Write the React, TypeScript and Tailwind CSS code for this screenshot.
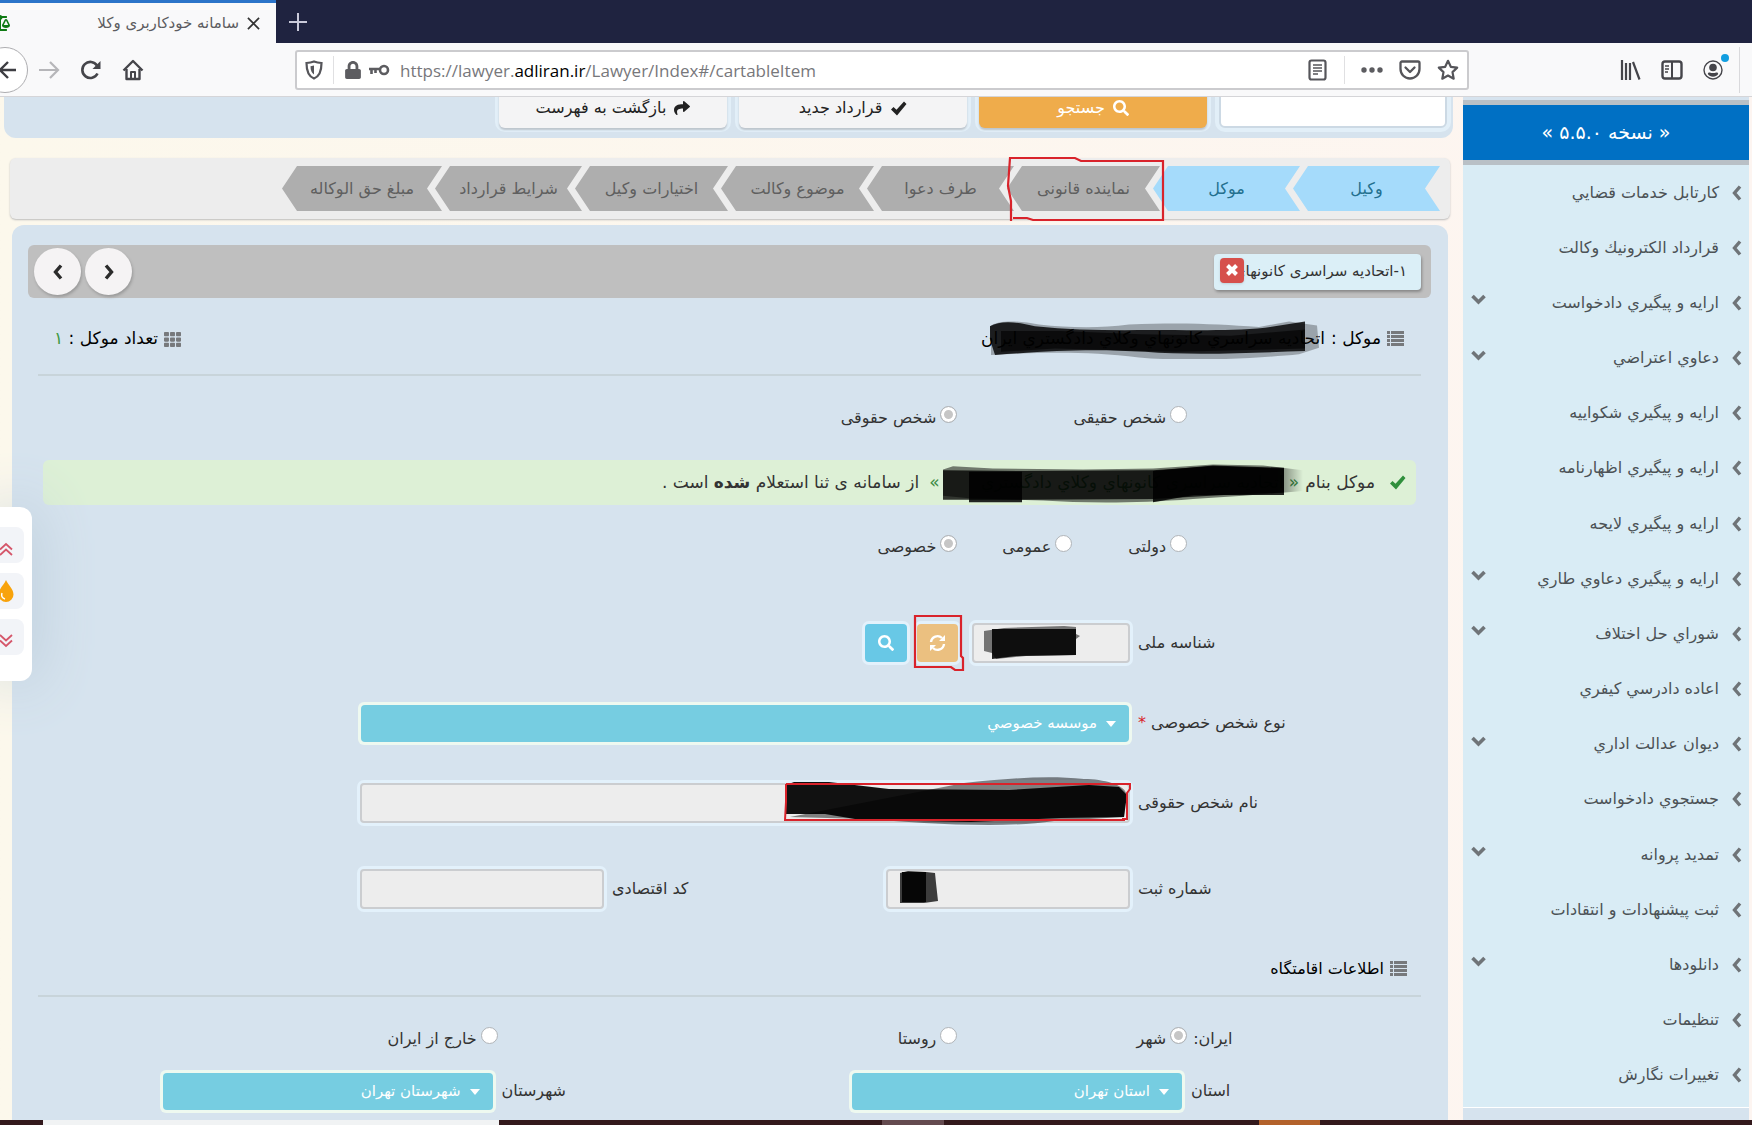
import type { ReactNode } from "react";
import { FaBalanceScale, FaLock, FaSearch, FaShare, FaTh } from "react-icons/fa";

const STEPS = [
    { title: "وکیل", done: true, width: "w-[147px]" },
    { title: "موکل", done: true, width: "w-[147px]" },
    { title: "نماینده قانونی", done: false, width: "w-[153px]", marked: true },
    { title: "طرف دعوا", done: false, width: "w-[147px]" },
    { title: "موضوع وکالت", done: false, width: "w-[153px]" },
    { title: "اختیارات وکیل", done: false, width: "w-[153px]" },
    { title: "شرایط قرارداد", done: false, width: "w-[147px]" },
    { title: "مبلغ حق الوکاله", done: false, width: "w-[160px]" },
];

const MENU = [
    { title: "كارتابل خدمات قضايي" },
    { title: "قرارداد الكترونيك وكالت" },
    { title: "ارايه و پيگيري دادخواست", sub: true },
    { title: "دعاوي اعتراضي", sub: true },
    { title: "ارايه و پيگيري شكواييه" },
    { title: "ارايه و پيگيري اظهارنامه" },
    { title: "ارايه و پيگيري لايحه" },
    { title: "ارايه و پيگيري دعاوي طاري", sub: true },
    { title: "شوراي حل اختلاف", sub: true },
    { title: "اعاده دادرسي كيفري" },
    { title: "ديوان عدالت اداري", sub: true },
    { title: "جستجوي دادخواست" },
    { title: "تمديد پروانه", sub: true },
    { title: "ثبت پيشنهادات و انتقادات" },
    { title: "دانلودها", sub: true },
    { title: "تنظيمات" },
    { title: "تغييرات نگارش" },
];

/* ---------- Icons ---------- */

function ListIcon() {
    return (
        <svg width="17" height="16" viewBox="0 0 17 16" fill="#77797c">
            {[0, 4, 8, 12].map((y) => (
                <g key={y}>
                    <rect x="0" y={y} width="3" height="3" />
                    <rect x="4" y={y} width="13" height="3" />
                </g>
            ))}
        </svg>
    );
}

function RefreshIcon() {
    return (
        <svg width="17" height="18" viewBox="0 0 17 18" fill="none" stroke="#fff" strokeWidth="2.4">
            <path d="M2 8a6.5 6.5 0 0 1 11-4M15 10a6.5 6.5 0 0 1-11 4" />
            <path d="M16 1v6h-6zM1 17v-6h6z" fill="#fff" stroke="none" />
        </svg>
    );
}

function CheckIcon() {
    return (
        <svg width="17" height="15" viewBox="0 0 17 15" fill="currentColor">
            <path d="M1 8.500L3.500 6l3 2.800L14 .5 16.500 3 7 14.500z" />
        </svg>
    );
}

function CrossIcon() {
    return (
        <svg width="12" height="12" viewBox="0 0 12 12" stroke="currentColor" strokeWidth="4">
            <path d="M1.500 1.500l9 9M10.500 1.500l-9 9" />
        </svg>
    );
}

const CHEVRONS = {
    left: "M9 1.500L3.500 8 9 14.500",
    right: "M3 1.500L8.500 8 3 14.500",
};

function Chevron({ to, color }: { to: "left" | "right"; color: string }) {
    return (
        <svg width="12" height="16" viewBox="0 0 12 16" fill="none" stroke={color} strokeWidth="3.400">
            <path d={CHEVRONS[to]} />
        </svg>
    );
}

/* ---------- Browser bars ---------- */

function Browser() {
    const iconButton = "flex items-center justify-center text-[#45454a]";
    return (
        <header className="shrink-0" dir="ltr">
            <div className="flex h-[43px] bg-[#1f2340]">
                <div className="flex w-[276px] items-center border-t-[3px] border-[#2b74c9] bg-[#f9f9fa] pr-4">
                    <FaBalanceScale className="-ml-2.5 size-5 text-[#0f7a14]" />
                    <span className="ml-auto text-[15px] text-[#5c5c60]" dir="rtl">
                        سامانه خودکاربری وکلا
                    </span>
                    <button aria-label="بستن" className="ml-2">
                        <svg width="13" height="13" viewBox="0 0 14 14" stroke="#333" strokeWidth="1.8">
                            <path d="M1 1l12 12M13 1L1 13" />
                        </svg>
                    </button>
                </div>
                <button aria-label="برگه جدید" className="ml-3">
                    <svg width="20" height="20" viewBox="0 0 20 20" stroke="#c9cada" strokeWidth="2">
                        <path d="M10 1v18M1 10h18" />
                    </svg>
                </button>
            </div>
            <div className="flex h-[54px] items-center border-b border-[#d5d5d8] bg-[#f9f9fa]">
                <button
                    aria-label="قبلی"
                    className="-ml-[18px] flex size-[46px] items-center justify-end rounded-full border border-[#adadb0] bg-white pr-2.5"
                >
                    <svg width="20" height="20" viewBox="0 0 20 20" fill="none" stroke="#3d3d42" strokeWidth="2.4">
                        <path d="M19 10H4M11 2l-8 8 8 8" />
                    </svg>
                </button>
                <button aria-label="بعدی" className="ml-2.5">
                    <svg width="22" height="20" viewBox="0 0 22 20" fill="none" stroke="#b6b6b9" strokeWidth="2.2">
                        <path d="M1 10h18M12 2l8 8-8 8" />
                    </svg>
                </button>
                <button aria-label="بارگذاری دوباره" className="ml-5">
                    <svg width="22" height="20" viewBox="0 0 22 20" fill="none" stroke="#45454a" strokeWidth="2.6">
                        <path d="M17.5 13.5A8 8 0 1 1 17 5.5" />
                        <path d="M20.5 1v8h-8z" fill="#45454a" stroke="none" />
                    </svg>
                </button>
                <button aria-label="خانه" className="ml-5">
                    <svg width="22" height="22" viewBox="0 0 22 22" fill="none" stroke="#45454a" strokeWidth="2.4" strokeLinejoin="round">
                        <path d="M1.5 11.5L11 2l9.500 9.500" />
                        <path d="M4.500 10v10h13V10" />
                        <path d="M9 20v-7h4v7" strokeWidth="2" />
                    </svg>
                </button>

                <div className="ml-[151px] flex h-10 flex-1 items-center rounded-[3px] border-2 border-[#cbcbce] bg-white px-2">
                    <svg width="18" height="20" viewBox="0 0 18 20" fill="none" stroke="#55555a" strokeWidth="2.2">
                        <path d="M9 1.500c2.500 1 5 1.400 7.500 1.500 0 7-1 13-7.500 15.500C2.500 16 1.500 10 1.500 3 4 2.900 6.500 2.500 9 1.500z" />
                        <path d="M9 5.500v9c-2.500-1.500-3.500-4.500-3.500-8.200z" fill="#55555a" stroke="none" />
                    </svg>
                    <span className="ml-2.5 h-7 w-px bg-[#e0e0e2]" />
                    <FaLock className="ml-2.5 size-[18px] text-[#5c5c60]" />
                    <svg className="ml-1.5" width="22" height="12" viewBox="0 0 22 12" fill="none" stroke="#5c5c60">
                        <circle cx="16" cy="6" r="4" strokeWidth="2.6" />
                        <path d="M12 5H1M3.500 5v5M7.500 5v4" strokeWidth="2.600" />
                    </svg>
                    <span className="ml-2.5 pt-0.5 font-['Open_Sans',sans-serif] text-[17px] text-[#77777b]">
                        https://lawyer.<span className="text-black">adliran.ir</span>/Lawyer/Index#/cartableItem
                    </span>
                    <span className="ml-auto flex items-center">
                        <button aria-label="نمای خواندن" className={iconButton}>
                            <svg width="20" height="22" viewBox="0 0 20 22" fill="none" stroke="#55555a">
                                <rect x="1.500" y="1.500" width="16" height="19" rx="2" strokeWidth="2.200" />
                                <path d="M5 6h9M5 9h9M5 12h9M5 15h5" strokeWidth="1.300" />
                            </svg>
                        </button>
                        <span className="mx-4 h-7 w-px bg-[#e0e0e2]" />
                        <button aria-label="بیشتر" className={iconButton}>
                            <svg width="22" height="6" viewBox="0 0 22 6" fill="#5c5c60">
                                <circle cx="3" cy="3" r="2.700" />
                                <circle cx="11" cy="3" r="2.700" />
                                <circle cx="19" cy="3" r="2.700" />
                            </svg>
                        </button>
                        <button aria-label="ذخیره" className={`${iconButton} ml-4`}>
                            <svg width="22" height="20" viewBox="0 0 22 20" fill="none" stroke="#55555a" strokeWidth="2.300" strokeLinejoin="round">
                                <path d="M3 1.500h16a1.500 1.500 0 0 1 1.500 1.500v6a9.500 9.500 0 0 1-19 0V3A1.500 1.500 0 0 1 3 1.500z" />
                                <path d="M6.500 7.500L11 12l4.500-4.500" strokeLinecap="round" />
                            </svg>
                        </button>
                        <button aria-label="نشانک" className={`${iconButton} ml-4`}>
                            <svg width="22" height="22" viewBox="0 0 22 22" fill="none" stroke="#55555a" strokeWidth="2.200" strokeLinejoin="round">
                                <path d="M11 1.800l2.800 6 6.400.8-4.700 4.500 1.200 6.600-5.700-3.200-5.700 3.200 1.200-6.600L1.800 8.600l6.400-.8z" />
                            </svg>
                        </button>
                    </span>
                </div>

                <div className="ml-[151px] flex items-center gap-5">
                    <button aria-label="کتابخانه" className={iconButton}>
                        <svg width="21" height="20" viewBox="0 0 21 20" fill="none" stroke="#45454a" strokeWidth="2.200">
                            <path d="M2 0v20M6 3v17M10 3v17M13 2l6.500 17.500" />
                        </svg>
                    </button>
                    <button aria-label="نوار کناری" className={iconButton}>
                        <svg width="22" height="20" viewBox="0 0 22 20" fill="none" stroke="#45454a">
                            <rect x="1.500" y="1.500" width="19" height="17" rx="2.500" strokeWidth="2.400" />
                            <path d="M11 2v16" strokeWidth="2" />
                            <path d="M4 6h4M4 9h4M4 12h3" strokeWidth="1.300" />
                        </svg>
                    </button>
                    <button aria-label="حساب" className={`${iconButton} relative`}>
                        <svg width="20" height="20" viewBox="0 0 20 20" fill="#45454a">
                            <circle cx="10" cy="10" r="9" fill="none" stroke="#45454a" strokeWidth="1.400" />
                            <circle cx="10" cy="7.500" r="3.800" />
                            <path d="M4.800 14c0-1.300 1-1.800 2-1.500 2 .8 4.400.8 6.400 0 1-.3 2 .2 2 1.500-1.300 1.900-3 2.700-5.200 2.700s-3.900-.8-5.200-2.700z" />
                        </svg>
                        <span className="absolute -right-1.5 -top-1.5 size-2 rounded-full bg-[#129ee0]" />
                    </button>
                </div>
                <span className="ml-4 mr-3 h-[46px] w-px bg-[#d9d9dc]" />
            </div>
        </header>
    );
}

/* ---------- Marks drawn over the form ---------- */

function RedMark({ className, d, box }: { className: string; d: string; box: string }) {
    return (
        <svg
            className={`pointer-events-none absolute z-10 ${className}`}
            viewBox={box}
            fill="none"
            stroke="#d9232b"
            strokeWidth="2.200"
            aria-hidden="true"
        >
            <path d={d} />
        </svg>
    );
}

function ClientScribble() {
    return (
        <svg
            className="absolute left-2 top-1/2 z-10 -translate-y-1/2"
            width="332"
            height="40"
            viewBox="0 0 332 50"
            preserveAspectRatio="none"
            aria-hidden="true"
        >
            <path d="M1 9C10 1 30 2 50 7c30 4 60 5 90 0 60-3 90 0 130 3l30-7 28 5 2 28-20 8c-40 5-110 10-160 4-50-7-90-7-148-3L2 36z" fill="#111" opacity=".3" />
            <path d="M1 9C12 1 30 4 46 9c30 4 60 5 90 5 50-1 100 2 140-3l40-8v37c-50 2-110 6-160 1-50-4-90-2-150 4L1 26z" fill="#000" opacity=".82" />
            <path d="M12 15h60l80 4 90 2 74-8v24l-130 4-120-4-54 4z" fill="#000" opacity=".6" />
        </svg>
    );
}

function AlertScribble() {
    return (
        <svg
            className="absolute left-0 top-1/2 z-10 -translate-y-1/2"
            width="362"
            height="40"
            viewBox="0 0 362 50"
            preserveAspectRatio="none"
            aria-hidden="true"
        >
            <defs>
                <linearGradient id="fade">
                    <stop offset=".93" stopColor="#000" />
                    <stop offset="1" stopColor="#000" stopOpacity="0" />
                </linearGradient>
            </defs>
            <path d="M12 4l40 3 90 1 70-1 60-5 50 1 40 6v26l-60 6-50 4c-60 6-110 5-150 2L28 44 2 41V8z" fill="url(#fade)" opacity=".5" />
            <path d="M2 9l80 1 130-1 60-5 45 2 26 1v30l-60 3-71 5-150 1H2z" fill="#000" opacity=".78" />
            <path d="M28 11h53v38H28zM212 10l60-7 71 3v34h-30l-60 0-41 9z" fill="#000" opacity=".85" />
        </svg>
    );
}

/* ---------- Form pieces ---------- */

function Radio({
    id,
    name,
    label,
    checked = false,
    className = "",
}: {
    id: string;
    name: string;
    label: string;
    checked?: boolean;
    className?: string;
}) {
    return (
        <div className={`flex items-center gap-1 whitespace-nowrap ${className}`}>
            <input
                type="radio"
                id={id}
                name={name}
                defaultChecked={checked}
                className="mb-2 size-[17px] shrink-0 appearance-none rounded-full border border-[#b0b4b8] bg-white checked:bg-[#c6c6c6] checked:shadow-[inset_0_0_0_3px_#fff]"
            />
            <label htmlFor={id}>{label}</label>
        </div>
    );
}

function Select({ id, value, className }: { id: string; value: string; className: string }) {
    return (
        <div className={`relative shrink-0 rounded-md bg-[#eef9f0] p-[3px] ${className}`}>
            <select
                id={id}
                className="block h-[37px] w-full appearance-none rounded-[4px] bg-[#76cde1] pr-8 text-[15px] text-white"
            >
                <option>{value}</option>
            </select>
            <svg className="pointer-events-none absolute right-4 top-[19px]" width="10" height="6" viewBox="0 0 10 6" fill="#fff">
                <path d="M0 0h10L5 6z" />
            </svg>
        </div>
    );
}

function TextBox({ id, className }: { id: string; className: string }) {
    return (
        <input
            id={id}
            type="text"
            readOnly
            className={`block h-10 rounded-[4px] border-2 border-[#cbcdd0] bg-[#ededed] px-3 shadow-[0_0_0_3px_#e3f1fb] ${className}`}
        />
    );
}

function FieldRow({ id, label, children }: { id: string; label: ReactNode; children: ReactNode }) {
    return (
        <div className="flex h-20 items-center">
            <label htmlFor={id} className="w-[287px] shrink-0 pl-2 text-left">
                {label}
            </label>
            {children}
        </div>
    );
}

function TopBar() {
    const base =
        "flex h-10 w-[228px] items-center justify-center gap-2 rounded-md shadow-[0_2px_2px_#bcc4cc,0_0_0_4px_#e2eff8]";
    return (
        <div className="-mt-[13px] ml-1 mr-2.5 flex h-[54px] shrink-0 gap-3 rounded-b-xl bg-[#d6e3ee] pr-1.5 pt-1">
            <input
                aria-label="عبارت جستجو"
                type="text"
                className="h-10 w-[228px] rounded-md border-2 border-[#ccd9e4] bg-white shadow-[0_0_0_4px_#e2eff8]"
            />
            <button className={`${base} bg-[#efac4b] text-white`}>
                <FaSearch />
                جستجو
            </button>
            <button className={`${base} bg-[#f4f4f5] text-[#222]`}>
                <CheckIcon />
                قرارداد جدید
            </button>
            <button className={`${base} bg-[#f4f4f5] text-[#222]`}>
                <FaShare />
                بازگشت به فهرست
            </button>
        </div>
    );
}

function StepBar() {
    return (
        <nav className="ml-2.5 mr-[13px] mt-5 flex h-[61px] shrink-0 rounded-md bg-[#ededed] pr-2.5 pt-2 shadow-[0_1px_2px_#bbb]">
            {STEPS.map((step) => (
                <div key={step.title} className={`relative -ml-[7px] h-[45px] shrink-0 ${step.width}`}>
                    <button
                        className={`h-full w-full [clip-path:polygon(15px_0,100%_0,calc(100%-15px)_50%,100%_100%,15px_100%,0_50%)] ${
                            step.done ? "bg-[#a5dbfb] text-[#23708f]" : "bg-[#aeaeae] text-[#5f5f5f]"
                        }`}
                    >
                        {step.title}
                    </button>
                    {step.marked && (
                        <RedMark
                            className="-left-0.5 -top-[10px] h-[66px] w-[160px]"
                            box="0 0 160 66"
                            d="M6 65V45L3 30 5 2h65l6 3h82v59H28l-6-2H8"
                        />
                    )}
                </div>
            ))}
        </nav>
    );
}

function ClientForm() {
    return (
        <main className="ml-3 mr-[15px] mt-1.5 flex-1 rounded-t-xl bg-[#d6e3ee] pt-5 text-[#333]">
            <div className="ml-4 mr-[17px] flex h-[53px] items-center rounded-md bg-[#bfbfbf] pl-1.5 pr-2.5">
                <div className="relative flex h-9 w-[207px] items-center rounded-[4px] bg-[#dbeff7] pr-3.5 shadow-[1px_2px_3px_#888]">
                    <span className="whitespace-nowrap text-[15px]">۱-اتحادیه سراسری کانونهاي</span>
                    <button
                        aria-label="حذف"
                        className="absolute left-1.5 top-1 flex h-[25px] w-6 items-center justify-center rounded-[4px] bg-[#d6504c] text-white shadow"
                    >
                        <CrossIcon />
                    </button>
                </div>
                <div className="mr-auto flex gap-1">
                    <button
                        aria-label="بعدی"
                        className="flex size-[47px] items-center justify-center rounded-full bg-[#f5f3f4] shadow-[1px_2px_3px_#999]"
                    >
                        <Chevron to="right" color="#2b2b2b" />
                    </button>
                    <button
                        aria-label="قبلی"
                        className="flex size-[47px] items-center justify-center rounded-full bg-[#f5f3f4] shadow-[1px_2px_3px_#999]"
                    >
                        <Chevron to="left" color="#2b2b2b" />
                    </button>
                </div>
            </div>

            <div className="ml-[26px] mr-[27px]">
                <div className="flex h-[78px] items-center border-b-2 border-[#c8d4da] pl-4 pr-[17px] pt-1.5 text-[17px] text-black">
                    <h2 className="flex items-center gap-1.5 whitespace-nowrap">
                        <ListIcon />
                        موکل :
                        <span className="relative">
                            اتحادیه سراسري کانونهاي وکلاي دادگستري ایران
                            <ClientScribble />
                        </span>
                    </h2>
                    <p className="mr-auto flex items-center gap-1.5">
                        <FaTh className="text-[#77797c]" />
                        <span>
                            تعداد موکل : <span className="text-[#3f9a45]">۱</span>
                        </span>
                    </p>
                </div>

                <div className="mr-1 grid h-[84px] grid-cols-12 items-center">
                    <Radio id="real" name="kind" label="شخص حقیقی" className="col-start-3" />
                    <Radio id="legal" name="kind" label="شخص حقوقی" checked className="col-start-5" />
                </div>

                <p className="ml-[5px] mr-[5px] flex h-[45px] items-center whitespace-nowrap rounded-md bg-[#ddf0d6] pr-2.5 text-[17px]">
                    <span className="text-[#2f8f3c]">
                        <CheckIcon />
                    </span>
                    <span className="mr-3.5">موکل بنام</span>
                    <span className="relative mx-1.5 w-[374px] text-[#3c8a45]">
                        « اتحادیه سراسري کانونهاي وکلاي دادگستري
                        <span className="absolute left-0 top-0 bg-[#ddf0d6] pl-1">»</span>
                        <span className="absolute inset-y-0 left-4">
                            <AlertScribble />
                        </span>
                    </span>
                    <span>
                        از سامانه ی ثنا استعلام <b className="font-semibold">شده</b> است .
                    </span>
                </p>

                <div className="mr-1 grid h-[84px] grid-cols-12 items-center">
                    <Radio id="gov" name="sector" label="دولتی" className="col-start-3" />
                    <Radio id="public" name="sector" label="عمومی" className="col-start-4" />
                    <Radio id="private" name="sector" label="خصوصی" checked className="col-start-5" />
                </div>

                <div className="mr-1 pt-[14px]">
                    <FieldRow id="nid" label="شناسه ملی">
                        <div className="relative">
                            <TextBox id="nid" className="w-[158px]" />
                            <svg className="absolute left-2.5 top-0.5" width="100" height="36" viewBox="0 0 100 36" aria-hidden="true">
                                <path d="M2 6l20-3 60-2 12 1v7l4 2-4 3v16l-50 1-30 3-4-6-8-2z" fill="#111" opacity=".55" />
                                <path d="M10 4h84v26l-60 1-24 3z" fill="#000" opacity=".88" />
                            </svg>
                        </div>
                        <div className="relative mr-3.5">
                            <button
                                aria-label="بازنشانی"
                                className="flex h-[38px] w-[41px] items-center justify-center rounded-[4px] bg-[#ebc080] shadow-[0_0_0_3px_#e3f1fb]"
                            >
                                <RefreshIcon />
                            </button>
                            <RedMark
                                className="-left-1 -top-2.5 h-[58px] w-[52px]"
                                box="0 0 52 58"
                                d="M2 2h46v40l2 2v12h-8l-4-3H2z"
                            />
                        </div>
                        <button
                            aria-label="استعلام"
                            className="mr-2.5 flex h-[38px] w-[42px] items-center justify-center rounded-[4px] bg-[#68c8e6] text-white shadow-[0_0_0_3px_#e3f1fb]"
                        >
                            <FaSearch />
                        </button>
                    </FieldRow>

                    <FieldRow
                        id="ptype"
                        label={
                            <>
                                نوع شخص خصوصی <span className="text-[#d9232b]">*</span>
                            </>
                        }
                    >
                        <Select id="ptype" value="موسسه خصوصي" className="-mr-0.5 w-[774px]" />
                    </FieldRow>

                    <FieldRow id="pname" label="نام شخص حقوقی">
                        <div className="relative">
                            <TextBox id="pname" className="w-[770px]" />
                            <svg className="absolute -right-1 -top-1.5 z-10" width="350" height="50" viewBox="0 0 350 50" aria-hidden="true">
                                <path d="M180 6c40-4 80-8 120-4 20 0 40 6 42 14l-2 24-70 4c-40 6-90 4-130 2l-60-4-74-2z" fill="#111" opacity=".5" />
                                <path d="M2 8l8-3h35l60 7 120 1 80-5 30 2 8 8-3 22-63 1-90 4-110-2-36-6H2z" fill="#000" opacity=".93" />
                                <path d="M2 7h344v5l-3 4v26h-5M2 7v18l-1 18h340" fill="none" stroke="#d9232b" strokeWidth="2" />
                            </svg>
                        </div>
                    </FieldRow>

                    <div className="mt-1.5">
                        <FieldRow id="regno" label="شماره ثبت">
                            <div className="flex w-[770px] justify-between">
                                <div className="relative">
                                    <TextBox id="regno" className="w-[244px]" />
                                    <svg className="absolute left-3.5 top-0.5" width="42" height="34" viewBox="0 0 42 34" aria-hidden="true">
                                        <path d="M0 2l8-2 18 1 9 1 1 10 2 18-14 2H0z" fill="#000" opacity=".75" />
                                        <path d="M2 1h24v30H2z" fill="#000" opacity=".9" />
                                    </svg>
                                </div>
                                <div className="flex items-center gap-2">
                                    <label htmlFor="econ">کد اقتصادی</label>
                                    <TextBox id="econ" className="w-[244px]" />
                                </div>
                            </div>
                        </FieldRow>
                    </div>
                </div>

                <h2 className="mt-2 flex h-[60px] items-center gap-1.5 border-b-2 border-[#c8d4da] pr-3.5 pt-1.5 text-black">
                    <ListIcon />
                    اطلاعات اقامتگاه
                </h2>

                <div className="mr-1 grid h-[70px] grid-cols-12 items-center pt-3.5">
                    <span className="col-span-2 pl-1.5 text-left">ایران:</span>
                    <Radio id="city" name="place" label="شهر" checked />
                    <Radio id="village" name="place" label="روستا" className="col-start-5" />
                    <Radio id="abroad" name="place" label="خارج از ایران" className="col-start-9" />
                </div>

                <div className="mr-1 grid h-[48px] grid-cols-2">
                    <div className="flex items-center">
                        <label htmlFor="province" className="w-[232px] shrink-0 pl-1.5 text-left">
                            استان
                        </label>
                        <Select id="province" value="استان تهران" className="w-[336px]" />
                    </div>
                    <div className="flex items-center">
                        <label htmlFor="county" className="w-[232px] shrink-0 pl-1.5 text-left">
                            شهرستان
                        </label>
                        <Select id="county" value="شهرستان تهران" className="w-[336px]" />
                    </div>
                </div>
            </div>
        </main>
    );
}

function Sidebar() {
    return (
        <aside className="mr-[3px] flex w-[286px] shrink-0 flex-col bg-[#d6e3ee]">
            <div className="h-[3px] shrink-0" />
            <div className="flex h-[65px] shrink-0 items-center justify-center border-y-[5px] border-[#b9c0c6] bg-[#0070c4] text-[19px] text-white">
                « نسخه ۵.۵.۰ »
            </div>
            <ul className="flex flex-1 flex-col bg-[#d9ecf5] pb-1 text-[#4c5256]">
                {MENU.map((item) => (
                    <li key={item.title} className="flex-1">
                        <a href="#" className="flex h-full items-center whitespace-nowrap pl-2 pr-1.5">
                            <Chevron to="left" color="#6f7478" />
                            <span className="mr-3">{item.title}</span>
                            {item.sub && (
                                <svg
                                    className="mb-1.5 mr-auto"
                                    width="15"
                                    height="11"
                                    viewBox="0 0 15 11"
                                    fill="none"
                                    stroke="#6f7478"
                                    strokeWidth="3.600"
                                >
                                    <path d="M1.500 2l6 6 6-6" />
                                </svg>
                            )}
                        </a>
                    </li>
                ))}
            </ul>
            <div className="h-[13px] shrink-0 border-t border-white" />
        </aside>
    );
}

function FloatingTools() {
    const tool = "-ml-3 flex h-9 w-9 items-center justify-center rounded-lg bg-[#f2f4f8]";
    return (
        <div
            className="absolute left-0 top-[410px] z-20 flex h-[174px] w-8 flex-col gap-2.5 rounded-r-xl bg-white pt-5 shadow-[0_0_60px_#b4c6d4]"
            dir="ltr"
        >
            <button aria-label="بالا" className={`${tool} pt-2`}>
                <svg width="14" height="14" viewBox="0 0 14 14" fill="none" stroke="#d5566a" strokeWidth="1.800">
                    <path d="M1 7.500L7 2l6 5.500M1 13l6-5.500 6 5.500" />
                </svg>
            </button>
            <button aria-label="رنگ" className={tool}>
                <svg width="16" height="22" viewBox="0 0 16 22">
                    <path d="M8 0c2 5 7.500 9 7.500 14.500a7.500 7.500 0 0 1-15 0C.5 9 6 5 8 0z" fill="#f8a30c" />
                    <path d="M4 13c-1 3 0 5 3 6" stroke="#fff" strokeWidth="1.500" fill="none" />
                </svg>
            </button>
            <button aria-label="پایین" className={`${tool} pt-2`}>
                <svg width="14" height="14" viewBox="0 0 14 14" fill="none" stroke="#d5566a" strokeWidth="1.800">
                    <path d="M1 1l6 5.500L13 1M1 6.500L7 12l6-5.500" />
                </svg>
            </button>
        </div>
    );
}

export default function App() {
    return (
        <div className="flex h-screen flex-col overflow-hidden font-['DejaVu_Sans',sans-serif] text-base">
            <Browser />
            <div className="relative flex min-h-0 flex-1 overflow-hidden bg-linear-to-r from-[#fcf8ec] to-[#fdf5f1]" dir="rtl">
                <Sidebar />
                <div className="flex min-w-0 flex-1 flex-col">
                    <TopBar />
                    <StepBar />
                    <ClientForm />
                </div>
                <FloatingTools />
            </div>
            <footer className="flex h-[5px] shrink-0 bg-[#33191c]">
                <span className="ml-[43px] w-[456px] bg-[#f1f3f4]" />
                <span className="ml-[383px] w-[62px] bg-[#644a4f]" />
                <span className="ml-[315px] w-[61px] bg-[#b3622b]" />
            </footer>
        </div>
    );
}
